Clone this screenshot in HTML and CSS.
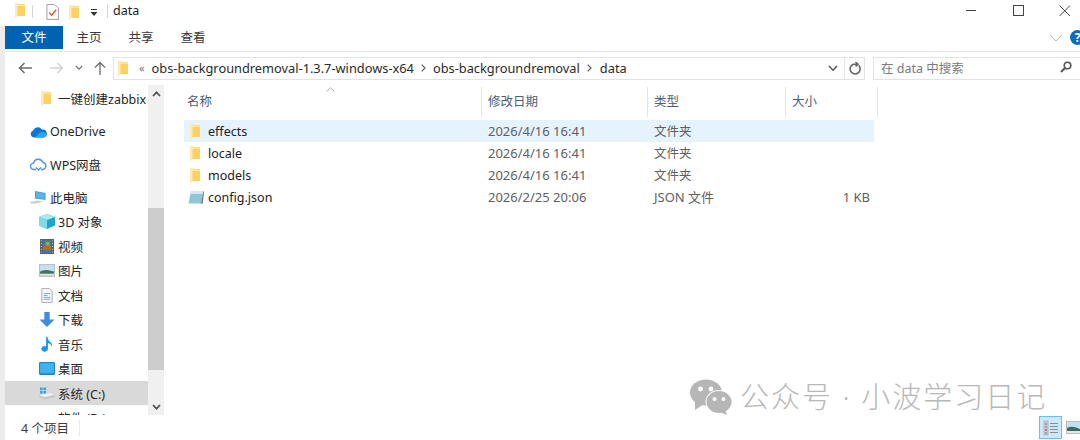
FILE: index.html
```html
<!DOCTYPE html>
<html lang="zh-CN">
<head>
<meta charset="utf-8">
<title>data</title>
<link rel="stylesheet" href="styles.css">
</head>
<body>
<svg class="defs" width="0" height="0" aria-hidden="true">
  <defs>
    <symbol id="folder" viewBox="0 0 10 15" preserveAspectRatio="none">
      <path d="M2 1 H10 V13 H2 Z" fill="#fad163"/>
      <path d="M0 .3 H4 L5 1.5 H10 V3 H2 V13.2 L0 15 Z" fill="#fee6a0"/>
      <path d="M0 .3 L2.5 1.5 V13.4 L0 15 Z" fill="#fdeab5"/>
    </symbol>
  </defs>
</svg>
<div class="win">
  <header class="title">
    <svg class="i f-title"><use href="#folder"/></svg>
    <span class="tsep"></span>
    <svg class="i-check" viewBox="0 0 14 17" width="13" height="16">
      <path d="M1 .5 H9.5 L13.5 4.5 V16.5 H1 Z" fill="#fff" stroke="#9a9a9a"/>
      <path d="M3.5 9 L6 12 L11 6" fill="none" stroke="#e8622c" stroke-width="1.6"/>
    </svg>
    <svg class="i f-title2"><use href="#folder"/></svg>
    <svg class="i-qat" viewBox="0 0 8 8" width="8" height="8">
      <path d="M1 0.5 H7" stroke="#333" fill="none"/><path d="M0.5 3 H7.5 L4 7 Z" fill="#333"/>
    </svg>
    <span class="tsep tsep2"></span>
    <span class="ttext">data</span>
    <div class="winbtns">
      <svg viewBox="0 0 12 12" width="12" height="12"><path d="M1 5.5 H11" stroke="#444" fill="none"/></svg>
      <svg viewBox="0 0 12 12" width="12" height="12"><rect x="1.5" y=".5" width="10" height="10" fill="none" stroke="#444"/></svg>
      <svg viewBox="0 0 12 12" width="12" height="12"><path d="M.5 .5 L11 11 M11 .5 L.5 11" stroke="#444" fill="none"/></svg>
    </div>
  </header>
  <div class="main">
    <nav class="ribbon">
      <span class="tab tab-on">文件</span>
      <span class="tab">主页</span>
      <span class="tab">共享</span>
      <span class="tab">查看</span>
      <svg class="rb-chev" viewBox="0 0 12 7" width="12" height="7"><path d="M.5 .5 L6 6 L11.5 .5" fill="none" stroke="#b5b5b5"/></svg>
      <span class="help">?</span>
    </nav>
    <div class="navbar">
      <div class="arrows">
        <svg viewBox="0 0 14 12" width="14" height="12"><path d="M14 6 H1.5 M6.5 1 L1.5 6 L6.5 11" fill="none" stroke="#6d6d6d" stroke-width="1.5"/></svg>
        <svg viewBox="0 0 14 12" width="14" height="12"><path d="M0 6 H12.5 M7.5 1 L12.5 6 L7.5 11" fill="none" stroke="#d4d4d4" stroke-width="1.5"/></svg>
        <svg viewBox="0 0 8 6" width="8" height="6"><path d="M.8 1 L4 4.2 L7.2 1" fill="none" stroke="#777" stroke-width="1.3"/></svg>
        <svg viewBox="0 0 12 14" width="12" height="14"><path d="M6 14 V1.5 M1 6.5 L6 1.5 L11 6.5" fill="none" stroke="#6d6d6d" stroke-width="1.3"/></svg>
      </div>
      <div class="addr">
        <svg class="i f-addr"><use href="#folder"/></svg>
        <span class="chev2">«</span>
        <span class="crumb">obs-backgroundremoval-1.3.7-windows-x64</span>
        <span class="crumb-sep"><svg viewBox="0 0 5 8" width="5" height="8"><path d="M.7 .7 L4 4 L.7 7.3" fill="none" stroke="#555" stroke-width="1.1"/></svg></span>
        <span class="crumb">obs-backgroundremoval</span>
        <span class="crumb-sep sep-b"><svg viewBox="0 0 5 8" width="5" height="8"><path d="M.7 .7 L4 4 L.7 7.3" fill="none" stroke="#555" stroke-width="1.1"/></svg></span>
        <span class="crumb">data</span>
        <svg class="addr-drop" viewBox="0 0 10 7" width="10" height="7"><path d="M1 1 L5 5.2 L9 1" fill="none" stroke="#555" stroke-width="1.5"/></svg>
        <span class="refresh">
          <svg viewBox="0 0 12 13" width="12" height="13"><path d="M9.8 3.5 A5 5 0 1 1 4.5 2.2 L8.5 2.2 M6.5 0 L9 2.2 L6.5 4.4" fill="none" stroke="#666" stroke-width="1.6"/></svg>
        </span>
      </div>
      <div class="search">
        <span class="search-t">在 data 中搜索</span>
        <svg viewBox="0 0 12 12" width="12" height="12"><circle cx="7.5" cy="4.5" r="3.3" fill="none" stroke="#555" stroke-width="1.6"/><path d="M5 7 L1 11" stroke="#555" stroke-width="2" fill="none"/></svg>
      </div>
    </div>
    <div class="body">
      <aside class="side">
        <div class="tree">
          <div class="row lv2"><svg class="i f-side"><use href="#folder"/></svg><span>一键创建zabbix</span></div>
          <div class="row lv1 grp"><svg class="ic" viewBox="0 0 17 11"><path d="M4 11 A3.6 3.6 0 0 1 3.2 4 A5 5 0 0 1 12 3 A4 4 0 0 1 13.5 11 Z" fill="#0f78d4"/><path d="M5 11 L10 6 Q14 4.5 16 7 Q17.5 10 14 11 Z" fill="#28a8ea"/></svg><span>OneDrive</span></div>
          <div class="row lv1 grp"><svg class="ic" viewBox="0 0 17 14"><path d="M4 12.5 A3.2 3.2 0 0 1 3.6 6 A4.8 4.8 0 0 1 12.8 5.4 A3.6 3.6 0 0 1 13 12.5 H11 M4 12.5 H6" fill="none" stroke="#4e8ff0" stroke-width="1.3"/><path d="M6 10.5 L8.5 13 L11 10.5" fill="none" stroke="#4e8ff0" stroke-width="1.3"/></svg><span>WPS网盘</span></div>
          <div class="row lv1 grp"><svg class="ic" viewBox="0 0 17 14"><path d="M5 1 L15.5 3 V10 L5 8.5 Z" fill="#3f9bdc"/><path d="M6 2 L14.5 3.6 V9 L6 7.8 Z" fill="#59b4ea"/><path d="M0 12 L8 10.5 L13 11.5 L6 13.5 H1 Z" fill="#c9c9c9"/></svg><span>此电脑</span></div>
          <div class="row lv2"><svg class="ic ic-l" viewBox="0 0 16 15"><path d="M8 0 L16 3 V11.5 L8 15 L0 11.5 V3 Z" fill="#1fa6c8"/><path d="M0 3 L8 6 L16 3 L8 0 Z" fill="#a9ebf0"/><path d="M8 6 V15 L0 11.5 V3 Z" fill="#7fdbe6"/></svg><span>3D 对象</span></div>
          <div class="row lv2"><svg class="ic ic-l" viewBox="0 0 15 16"><rect width="15" height="16" fill="#56606b"/><rect x="3" y="1" width="9" height="14" fill="#3e7a9c"/><rect x="3" y="7" width="9" height="5" fill="#b66a2c"/><rect x="6" y="3" width="4" height="4" fill="#8db14a"/><path d="M1 2 H2 M1 5 H2 M1 8 H2 M1 11 H2 M1 14 H2 M13 2 H14 M13 5 H14 M13 8 H14 M13 11 H14 M13 14 H14" stroke="#ddd"/></svg><span>视频</span></div>
          <div class="row lv2"><svg class="ic ic-l" viewBox="0 0 15 12"><rect width="15" height="12" fill="#b9bec3"/><rect x="1" y="1" width="13" height="10" fill="#c7e1f2"/><path d="M1 7 Q6 4 14 7 V11 H1 Z" fill="#44705f"/><path d="M1 9 H14 V11 H1 Z" fill="#dfe8e6"/></svg><span>图片</span></div>
          <div class="row lv2"><svg class="ic ic-l" viewBox="0 0 15 16"><path d="M2 .5 H10 L13 3.5 V15.5 H2 Z" fill="#f6f7f8" stroke="#a9adb1"/><path d="M4 6 H11 M4 8 H8 M4 10 H11 M4 12 H11" stroke="#7da2c0"/></svg><span>文档</span></div>
          <div class="row lv2"><svg class="ic ic-l" viewBox="0 0 14 14"><path d="M4.5 0 H9.5 V7 H14 L7 14 L0 7 H4.5 Z" fill="#3f8ddc"/></svg><span>下载</span></div>
          <div class="row lv2"><svg class="ic ic-l" viewBox="0 0 13 16"><path d="M5.5 0 H7 Q7.5 4 11 6 Q12.5 8 11 10 Q11 7.5 7.5 6.5 V12.5 A3.5 3 0 1 1 5.5 10 Z" fill="#1f97e8"/></svg><span>音乐</span></div>
          <div class="row lv2"><svg class="ic ic-l" viewBox="0 0 15 12"><rect width="15" height="12" rx="1" fill="#1b86d8"/><rect x="1" y="1" width="13" height="9.5" fill="#3fb2f2"/></svg><span>桌面</span></div>
          <div class="row lv2 row-sel"><svg class="ic ic-l" viewBox="0 0 16 12"><path d="M0 8 L10 5.5 L16 7 V9.5 L6 12 L0 10 Z" fill="#c8c8c8"/><path d="M0 8 L10 5.5 L16 7 L6 9.5 Z" fill="#f2f2f2"/><rect x="1" y="0" width="2.6" height="2.6" fill="#2aa7e8"/><rect x="4.4" y="0" width="2.6" height="2.6" fill="#2aa7e8"/><rect x="1" y="3.4" width="2.6" height="2.6" fill="#2aa7e8"/><rect x="4.4" y="3.4" width="2.6" height="2.6" fill="#2aa7e8"/></svg><span>系统 (C:)</span></div>
          <div class="row lv2"><span class="nogap">软件 (D:)</span></div>
        </div>
        <div class="sbar">
          <span class="sb-btn"><svg viewBox="0 0 9 6" width="9" height="6"><path d="M1 5 L4.5 1.3 L8 5" fill="none" stroke="#505050" stroke-width="1.7"/></svg></span>
          <span class="sb-track"><span class="sb-thumb"></span></span>
          <span class="sb-btn"><svg viewBox="0 0 9 6" width="9" height="6"><path d="M1 1 L4.5 4.7 L8 1" fill="none" stroke="#505050" stroke-width="1.7"/></svg></span>
        </div>
      </aside>
      <section class="list">
        <div class="thead">
          <span class="col c1">名称<svg class="sort" viewBox="0 0 9 5" width="9" height="5"><path d="M.5 4.5 L4.5 .7 L8.5 4.5" fill="none" stroke="#b4b4b4"/></svg></span>
          <span class="col c2">修改日期</span>
          <span class="col c3">类型</span>
          <span class="col c4">大小</span>
        </div>
        <div class="trow sel"><span class="c1 cell"><svg class="i f-row"><use href="#folder"/></svg>effects</span><span class="c2 cell dim">2026/4/16 16:41</span><span class="c3 cell dim">文件夹</span><span class="c4 cell"></span></div>
        <div class="trow"><span class="c1 cell"><svg class="i f-row"><use href="#folder"/></svg>locale</span><span class="c2 cell dim">2026/4/16 16:41</span><span class="c3 cell dim">文件夹</span><span class="c4 cell"></span></div>
        <div class="trow"><span class="c1 cell"><svg class="i f-row"><use href="#folder"/></svg>models</span><span class="c2 cell dim">2026/4/16 16:41</span><span class="c3 cell dim">文件夹</span><span class="c4 cell"></span></div>
        <div class="trow"><span class="c1 cell"><svg class="f-json" viewBox="0 0 16 15" width="16" height="15"><path d="M3 1 H15.5 L13 13.5 H.5 Z" fill="#8ec7d6"/><path d="M3 1 H15.5 L14.8 4 H2.4 Z" fill="#d5eaf0"/><path d="M15.5 1 L13 13.5 L14.5 14 L16 2 Z" fill="#666"/></svg>config.json</span><span class="c2 cell dim">2026/2/25 20:06</span><span class="c3 cell dim wide">JSON 文件</span><span class="c4 cell dim right">1 KB</span></div>
      </section>
    </div>
    <footer class="status">
      <span class="count">4 个项目</span>
      <span class="st-sep"></span>
      <div class="views">
        <span class="vbtn on"><svg viewBox="0 0 16 16" width="16" height="16"><rect x="1" y="1" width="4" height="14" fill="#d0d0d0" stroke="#999" stroke-width=".6"/><path d="M2 4 H4 M2 7 H4 M2 10 H4 M2 13 H4" stroke="#777"/><path d="M2 10 H4" stroke="#e0503c"/><path d="M7 3.5 H15 M7 6.5 H15 M7 9.5 H15 M7 12.5 H15" stroke="#8d8d8d"/></svg></span>
        <span class="vbtn"><svg viewBox="0 0 15 13" width="15" height="13"><rect width="15" height="13" fill="#b9bcc0"/><rect x="1" y="1" width="13" height="11" fill="#bfe0f5"/><path d="M1 7 Q6 4 14 8 V12 H1 Z" fill="#3f6d5c"/><path d="M1 10 H14 V12 H1 Z" fill="#dfe8ea"/></svg></span>
      </div>
    </footer>
  </div>
  <div class="wm">
    <svg class="wm-i" viewBox="0 0 42 36" width="42" height="36">
      <ellipse cx="16" cy="13.5" rx="16" ry="13" fill="#b6b6b6"/>
      <path d="M5 22 L5 31 L14 25 Z" fill="#b6b6b6"/>
      <circle cx="10.5" cy="10" r="2.4" fill="#fff"/><circle cx="21" cy="10" r="2.4" fill="#fff"/>
      <ellipse cx="29" cy="23" rx="13.5" ry="12" fill="#fff"/>
      <ellipse cx="29" cy="23" rx="12.5" ry="11" fill="#b6b6b6"/>
      <path d="M35 31 L37 36 L30 33 Z" fill="#b6b6b6"/>
      <circle cx="24.5" cy="20" r="2" fill="#fff"/><circle cx="33.5" cy="20" r="2" fill="#fff"/>
    </svg>
    <span class="wm-t">公众号 · 小波学习日记</span>
  </div>
</div>
</body>
</html>
```
FILE: styles.css
```css
* { box-sizing: border-box; }
html, body { margin: 0; padding: 0; background: #fff; }
body { width: 1080px; height: 440px; overflow: hidden; }
.defs { position: absolute; }
.win {
  position: relative;
  width: 1080px;
  height: 440px;
  display: flex;
  flex-direction: column;
  overflow: hidden;
  font-family: "Noto Sans", "Noto Sans CJK SC", sans-serif;
  font-size: 12.5px;
  color: #1e1e1e;
}
.i { display: block; flex: none; }
.title {
  height: 26px;
  flex: none;
  display: flex;
  align-items: center;
  padding-left: 15px;
}
.f-title { width: 10px; height: 15px; margin-top: -5px; }
.tsep { width: 1px; height: 13px; background: #d5d5d5; margin: -4px 0 0 7px; }
.tsep2 { margin-left: 9px; height: 14px; }
.i-check { margin: -2px 0 0 13px; }
.f-title2 { width: 10px; height: 15px; margin: -2px 0 0 10px; }
.i-qat { margin: -1px 0 0 11px; }
.ttext { margin: -5px 0 0 5px; }
.winbtns { margin-left: auto; display: flex; gap: 35px; padding-right: 9px; margin-top: -5px; }
.main {
  flex: 1;
  min-height: 0;
  display: flex;
  flex-direction: column;
  border-left: 5px solid #ececec;
}
.ribbon {
  height: 26px;
  flex: none;
  display: flex;
  align-items: flex-start;
  border-bottom: 1px solid #e6e6e6;
  position: relative;
}
.tab { width: 52px; height: 23px; line-height: 23px; text-align: center; color: #3a3a3a; }
.tab-on { width: 58px; background: #0063b1; color: #fff; }
.rb-chev { margin: 9px 0 0 auto; }
.help {
  width: 15px;
  height: 15px;
  flex: none;
  margin: 4px -5px 0 8px;
  border-radius: 50%;
  background: #0f6cbd;
  color: #fff;
  font-size: 12px;
  font-weight: 700;
  line-height: 15px;
  text-align: center;
}
.navbar {
  height: 33px;
  flex: none;
  display: flex;
  align-items: center;
  padding-bottom: 1px;
}
.arrows { width: 108px; display: flex; align-items: center; padding-left: 13px; flex: none; }
.arrows svg:nth-child(2) { margin-left: 18px; }
.arrows svg:nth-child(3) { margin-left: 11px; }
.arrows svg:nth-child(4) { margin-left: 11px; }
.addr {
  width: 752px;
  height: 23px;
  flex: none;
  display: flex;
  align-items: center;
  border: 1px solid #e3e3e3;
  padding-left: 4px;
  color: #2a2a2a;
}
.f-addr { width: 10px; height: 15px; }
.chev2 { color: #777; font-size: 11px; margin: -2px 0 0 11px; }
.crumb { font-size: 12.8px; }
.chev2 + .crumb { margin-left: 7px; }
.crumb-sep { display: flex; width: 19px; justify-content: center; }
.sep-b { width: 20px; }
.addr-drop { margin-left: auto; margin-right: 6px; }
.refresh {
  width: 20px;
  height: 21px;
  display: flex;
  align-items: center;
  justify-content: center;
  border-left: 1px solid #e3e3e3;
}
.search {
  margin-left: 8px;
  flex: 1;
  height: 23px;
  display: flex;
  align-items: center;
  justify-content: space-between;
  border: 1px solid #e3e3e3;
  border-right: 0;
  padding: 0 8px 2px 7px;
  color: #7b7b7b;
}
.body { flex: 1; min-height: 0; display: flex; }
.side { width: 159px; flex: none; display: flex; }
.tree { width: 143px; flex: none; overflow: hidden; padding-top: 1.5px; }
.row { height: 24.5px; display: flex; align-items: center; white-space: nowrap; color: #262626; }
.lv1 { padding-left: 25px; }
.lv2 { padding-left: 34px; }
.grp { margin-top: 8.25px; }
.f-side { width: 10px; height: 15px; margin-left: 2px; margin-right: 7px; }
.ic { width: 17px; height: 14px; margin-right: 3px; flex: none; }
.ic-l { width: 16px; height: 15px; margin-right: 3px; }
.row > .nogap { margin-left: 19px; }
.row-sel { background: #d9d9d9; }
.sbar { width: 16px; flex: none; display: flex; flex-direction: column; background: #f0f0f0; }
.sb-btn { height: 17px; flex: none; display: flex; align-items: center; justify-content: center; }
.sb-track { flex: 1; padding-top: 106px; padding-bottom: 28px; display: flex; }
.sb-thumb { flex: 1; background: #cdcdcd; }
.list { flex: 1; min-width: 0; padding-left: 20px; }
.thead { height: 35px; display: flex; }
.col {
  position: relative;
  height: 30px;
  margin-top: 2px;
  padding-bottom: 4px;
  display: flex;
  align-items: center;
  color: #4c607a;
  border-right: 1px solid #e5e5e5;
  padding-left: 6px;
}
.col.c1 { padding-left: 3px; }
.sort { position: absolute; left: 142px; top: 0; }
.c1 { width: 298px; }
.c2 { width: 166px; }
.c3 { width: 138px; }
.c4 { width: 92px; }
.trow { height: 22px; display: flex; width: 690px; align-items: center; }
.trow .c4 { width: 88px; }
.sel { background: #e5f3ff; }
.cell { display: flex; align-items: center; padding: 0 0 1px 6px; white-space: nowrap; }
.c1.cell { color: #222; padding-bottom: 0; }
.c2.cell { font-size: 13px; }
.dim { color: #5f5f5f; }
.wide { font-size: 13px; }
.right { justify-content: flex-end; padding-right: 4px; font-size: 13px; }
.f-row { width: 10px; height: 15px; margin-right: 8px; }
.f-json { margin: 0 4px 0 -2px; }
.status { height: 25px; flex: none; display: flex; align-items: center; position: relative; padding-left: 16px; color: #3c3c3c; }
.count { width: 58px; }
.st-sep { width: 1px; height: 16px; background: #e8e8e8; }
.views { margin-left: auto; display: flex; align-items: center; gap: 3px; margin-right: -2px; }
.vbtn { width: 17px; height: 23px; display: flex; align-items: center; justify-content: center; }
.vbtn.on { width: 23px; background: #cce8ff; border: 1px solid #69bdf0; }
.wm {
  position: absolute;
  left: 690px;
  top: 378px;
  display: flex;
  align-items: center;
  gap: 8px;
  pointer-events: none;
}
.wm-t { color: #b8b8b8; font-size: 29px; line-height: 38px; font-weight: 300; letter-spacing: 2px; white-space: nowrap; }
```
